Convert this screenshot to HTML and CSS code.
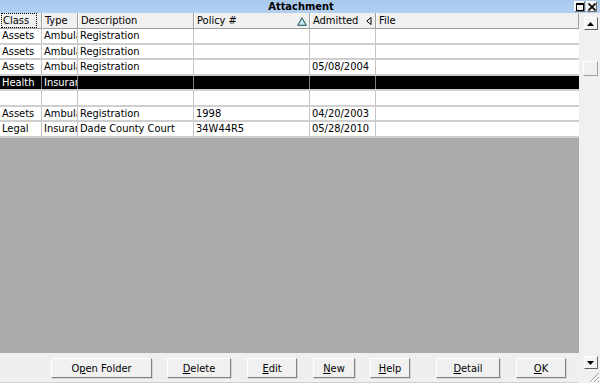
FILE: index.html
```html
<!DOCTYPE html>
<html>
<head>
<meta charset="utf-8">
<link rel="stylesheet" href="styles.css">
</head>
<body>
<div class="window">
  <div class="titlebar">
    <span class="title">Attachment</span>
    <div class="tbtns">
      <span class="tbtn"><svg width="8" height="8" viewBox="0 0 8 8"><rect x="0.5" y="0.5" width="7" height="7" fill="none" stroke="#000"/><rect x="0" y="0" width="8" height="2" fill="#000"/></svg></span>
      <span class="tbtn"><svg width="8" height="8" viewBox="0 0 8 8"><path d="M0.5 0.5 L7.5 7.5 M7.5 0.5 L0.5 7.5" stroke="#000" stroke-width="1.6"/></svg></span>
    </div>
  </div>
  <div class="body">
    <div class="main">
      <div class="grid">
        <div class="hrow">
          <div class="hc c1"><span class="focus">Class</span></div>
          <div class="hc c2">Type</div>
          <div class="hc c3">Description</div>
          <div class="hc c4"><span>Policy #</span><svg class="sorticon" width="10" height="9" viewBox="0 0 10 9"><path d="M5 0.8 L9.3 8.3 L0.7 8.3 Z" fill="#bfe6f0" stroke="#1b4a5a" stroke-width="1"/></svg></div>
          <div class="hc c5"><span>Admitted</span><svg class="leftarrow" width="6" height="8" viewBox="0 0 6 8"><path d="M5 0.5 L0.8 4 L5 7.5 Z" fill="#fff" stroke="#000" stroke-width="1"/></svg></div>
          <div class="hc c6">File</div>
        </div>
        <div class="row">
          <div class="c c1">Assets</div><div class="c c2">Ambulance</div><div class="c c3">Registration</div><div class="c c4"></div><div class="c c5"></div><div class="c c6"></div>
        </div>
        <div class="row">
          <div class="c c1">Assets</div><div class="c c2">Ambulance</div><div class="c c3">Registration</div><div class="c c4"></div><div class="c c5"></div><div class="c c6"></div>
        </div>
        <div class="row">
          <div class="c c1">Assets</div><div class="c c2">Ambulance</div><div class="c c3">Registration</div><div class="c c4"></div><div class="c c5">05/08/2004</div><div class="c c6"></div>
        </div>
        <div class="row sel">
          <div class="c c1">Health</div><div class="c c2">Insurance</div><div class="c c3"></div><div class="c c4"></div><div class="c c5"></div><div class="c c6"></div>
        </div>
        <div class="row">
          <div class="c c1"></div><div class="c c2"></div><div class="c c3"></div><div class="c c4"></div><div class="c c5"></div><div class="c c6"></div>
        </div>
        <div class="row">
          <div class="c c1">Assets</div><div class="c c2">Ambulance</div><div class="c c3">Registration</div><div class="c c4">1998</div><div class="c c5">04/20/2003</div><div class="c c6"></div>
        </div>
        <div class="row">
          <div class="c c1">Legal</div><div class="c c2">Insurance</div><div class="c c3">Dade County Court</div><div class="c c4">34W44R5</div><div class="c c5">05/28/2010</div><div class="c c6"></div>
        </div>
        <div class="filler"></div>
      </div>
      <div class="buttons">
        <button class="btn b-open">O<u>p</u>en Folder</button>
        <button class="btn b-del"><u>D</u>elete</button>
        <button class="btn b-edit"><u>E</u>dit</button>
        <button class="btn b-new"><u>N</u>ew</button>
        <button class="btn b-help"><u>H</u>elp</button>
        <button class="btn b-detail"><u>D</u>etail</button>
        <button class="btn b-ok"><u>O</u>K</button>
      </div>
    </div>
    <div class="scroll">
      <span class="sbtn up"><svg width="7" height="4" viewBox="0 0 7 4"><path d="M3.5 0 L7 4 L0 4 Z" fill="#000"/></svg></span>
      <span class="thumb"></span>
      <span class="spacer"></span>
      <span class="sbtn down"><svg width="7" height="4" viewBox="0 0 7 4"><path d="M0 0 L7 0 L3.5 4 Z" fill="#000"/></svg></span>
      <svg class="grip" width="12" height="12" viewBox="0 0 12 12"><path d="M11 2 L2 11 M11 6 L6 11 M11 10 L10 11" stroke="#a0a0a0" stroke-width="1"/><path d="M12 3 L3 12 M12 7 L7 12" stroke="#fff" stroke-width="1"/></svg>
    </div>
  </div>
</div>
</body>
</html>
```

FILE: styles.css
```css
* { box-sizing: border-box; }
html, body { margin: 0; padding: 0; }
body {
  width: 600px;
  height: 383px;
  overflow: hidden;
  font-family: Tahoma, "DejaVu Sans Condensed", "Liberation Sans", sans-serif;
  font-size: 11px;
  color: #000;
  background: #efefef;
}
.window { width: 600px; height: 383px; display: flex; flex-direction: column; }
.titlebar {
  height: 13px;
  flex: none;
  background: linear-gradient(#a8c8ec, #b3d0f0);
  display: flex;
  align-items: center;
  justify-content: center;
  position: relative;
}
.title { font-weight: bold; font-size: 11px; line-height: 13px; margin-left: 2px; }
.tbtns { position: absolute; right: 3px; top: 1px; display: flex; gap: 1px; }
.tbtn {
  width: 11px; height: 11px;
  background: #f0f0f0;
  border: 1px solid #fff;
  border-right-color: #707070;
  border-bottom-color: #707070;
  display: flex; align-items: center; justify-content: center;
}
.body { flex: 1; display: flex; min-height: 0; }
.main { width: 579px; display: flex; flex-direction: column; }
.grid { flex: 1; display: flex; flex-direction: column; background: #ababab; }
.hrow {
  height: 16px; flex: none; display: flex;
  background: #f0f0f0;
  border-bottom: 1px solid #a0a0a0;
}
.hc {
  height: 15px;
  line-height: 14px;
  padding-left: 2px;
  border-left: 1px solid #fff;
  border-right: 1px solid #a0a0a0;
  white-space: nowrap;
  overflow: hidden;
  display: flex;
  align-items: center;
}
.hc.c1 { padding-left: 1px; }
.focus { outline: 1px dotted #000; outline-offset: 0; padding: 0 7px 0 1px; line-height: 13px; }
.c1 { width: 42px; }
.c2 { width: 36px; }
.c3 { width: 116px; }
.c4 { width: 116px; }
.c5 { width: 66px; }
.c6 { width: 203px; }
.hc.c4, .hc.c5 { justify-content: space-between; padding-right: 2px; }
.sorticon { margin-top: 2px; }
.leftarrow { margin-right: 1px; }
.row {
  height: 15px; flex: none; display: flex;
  background: #fff;
  border-bottom: 2px solid #cfcfcf;
}
.row:nth-child(2n) { height: 16px; }
.row:last-of-type { height: 15px; }
.c {
  height: 100%;
  padding-left: 2px;
  line-height: 13px;
  border-right: 1px solid #c4c4c4;
  white-space: nowrap;
  overflow: hidden;
}
.c.c6 { border-right: none; }
.row.sel { background: #000; color: #fff; }
.row.sel .c { border-right-color: #808080; }
.filler { flex: 1; background: #ababab; }
.buttons {
  height: 30px; flex: none;
  position: relative;
  background: #efefef;
  border-bottom: 1px solid #cfcfcf;
}
.btn {
  position: absolute;
  top: 5px;
  height: 20px;
  font-family: inherit;
  font-size: 11px;
  color: #000;
  background: #f0f0f0;
  border: 1px solid #fff;
  border-right-color: #808080;
  border-bottom-color: #808080;
  box-shadow: 1px 1px 0 #d6d6d6;
  padding: 0;
}
.b-open { left: 51px; width: 101px; }
.b-del { left: 167px; width: 64px; }
.b-edit { left: 247px; width: 50px; }
.b-new { left: 313px; width: 42px; }
.b-help { left: 370px; width: 40px; }
.b-detail { left: 436px; width: 64px; }
.b-ok { left: 516px; width: 50px; }
.scroll {
  flex: 1;
  display: flex;
  flex-direction: column;
  align-items: center;
  background: #f0f0f0;
  position: relative;
  padding: 4px 0 14px 2px;
}
.sbtn {
  width: 14px; height: 13px; flex: none;
  background: #f4f4f4;
  border: 1px solid #fff;
  border-right-color: #606060;
  border-bottom-color: #606060;
  display: flex; align-items: center; justify-content: center;
}
.thumb {
  margin-top: 31px;
  width: 15px; height: 15px; flex: none;
  background: #f0f0f0;
  border: 1px solid #fff;
  border-right-color: #a0a0a0;
  border-bottom-color: #a0a0a0;
}
.spacer { flex: 1; }
.grip { position: absolute; right: 0; bottom: 0; }
```
